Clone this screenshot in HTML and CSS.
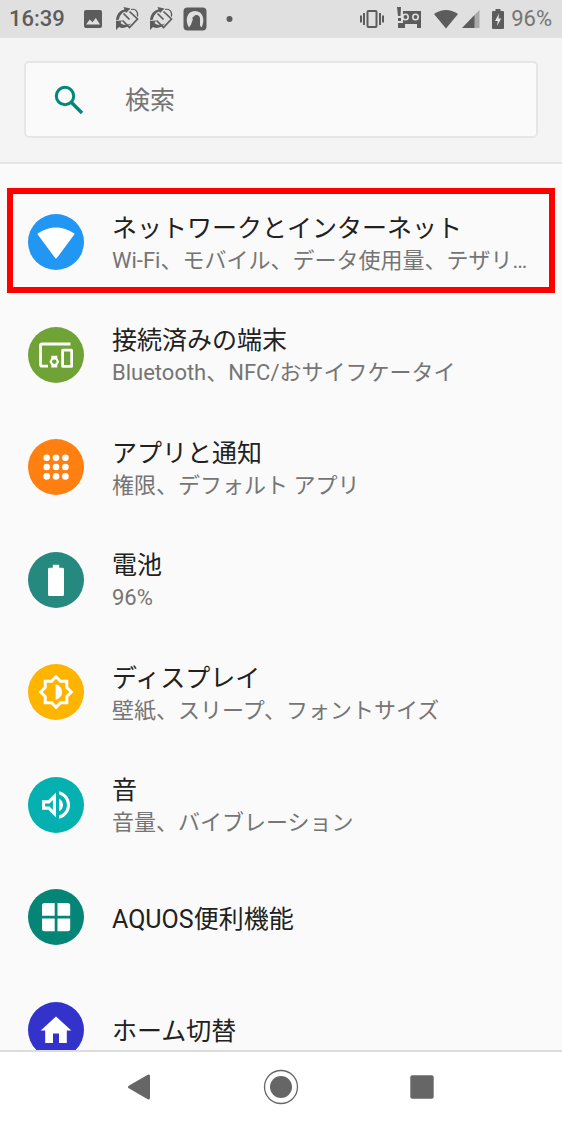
FILE: index.html
```html
<!DOCTYPE html>
<html lang="ja">
<head>
<meta charset="utf-8">
<meta name="viewport" content="width=device-width, initial-scale=1">
<title>設定</title>
<link rel="stylesheet" href="styles.css">
</head>
<body>
<svg class="defs" aria-hidden="true">
  <symbol id="rotate" viewBox="0 0 24 24">
    <path d="M8.500 6.500L14.500 12.500M14.500 4.500L22.500 12L14.500 20.500L7.500 13.500" fill="none" stroke="currentColor" stroke-width="1.700"/>
    <path d="M1 13.500C1.500 7 4.500 3.500 9.500 2.500L8.500 0L15.500 1.500L11 6L10.300 4.500C7 5.500 4.500 8.500 4 12.500Z" fill="currentColor"/>
    <path d="M1 14L7 13.500L5.500 16C8 18.500 12 18.500 16 16.500C13 20.500 8 22 4 20L1 23Z" fill="currentColor"/>
    <path d="M16 2.500C20 1.500 23.500 4 22.500 9.500" fill="none" stroke="currentColor" stroke-width="1.200"/>
  </symbol>
</svg>
<div class="screen">
  <header class="status">
    <time class="clock">16:39</time>
    <div class="notices">
      <svg width="24" height="24" viewBox="0 0 24 24"><path fill="currentColor" fill-rule="evenodd" d="M5 3H19Q21 3 21 5V19Q21 21 19 21H5Q3 21 3 19V5Q3 3 5 3ZM5 17.500H19L14.800 11L11.500 15.200L8.800 12.500Z"/></svg>
      <svg width="24" height="24"><use href="#rotate"/></svg>
      <svg width="24" height="24"><use href="#rotate"/></svg>
      <svg width="24" height="24" viewBox="0 0 24 24"><rect x="0.500" y="0.500" width="23" height="23" rx="4" fill="currentColor"/><path d="M6 20.500C1.500 13 4 4 12 4S22.500 13 18.500 20.500L17 18.500V11.500C17 9 15 7.500 12.500 8L9 11L10 12L8 17.500Z" fill="#e0e0e0"/></svg>
      <svg width="24" height="24" viewBox="0 0 24 24"><circle cx="12.500" cy="12" r="3" fill="currentColor"/></svg>
    </div>
    <div class="signals">
      <svg width="26" height="24" viewBox="0 0 26 24"><g fill="none" stroke="currentColor" stroke-width="2"><rect x="8.500" y="4" width="9" height="16" rx="1"/><path d="M5 6V18M2 8.500V15.500M21 6V18M24 8.500V15.500"/></g></svg>
      <svg width="24" height="24" viewBox="0 0 24 24"><g fill="currentColor"><path d="M0 0H4L3.500 9H1ZM1 11H4V14H1ZM6 4H24V21H20V17H8V21H1V16H6Z"/></g><g fill="currentColor" stroke="#e0e0e0" stroke-width="1.600"><circle cx="8.500" cy="10" r="2.700"/><circle cx="18.500" cy="10" r="2.700"/></g></svg>
      <span class="radio">
        <svg width="26" height="24" viewBox="0 0 26 24"><path d="M1 7Q13-1 25 7L13 21.500Z" fill="currentColor"/></svg>
        <svg width="18" height="24" viewBox="0 0 18 24"><path d="M17.500 3V21H12V8.500Z" fill="#aaa"/><path d="M0 21L12.500 8V21Z" fill="currentColor"/></svg>
      </span>
      <span class="charge">
        <svg width="12" height="24" viewBox="0 0 12 24"><path d="M3.500 2H8.500V4H11Q12 4 12 5V21Q12 22 11 22H1Q0 22 0 21V5Q0 4 1 4H3.500Z" fill="currentColor"/><path d="M7 6.500L3 14H5.800L5 19L9.200 11.500H6.500Z" fill="#e8e8e8"/></svg>
        <span class="percent">96%</span>
      </span>
    </div>
  </header>

  <form class="search" role="search">
    <label class="search-box">
      <svg class="search-icon" width="30" height="30" viewBox="0 0 30 30" role="img" aria-label="検索"><circle cx="11" cy="11" r="8.700" fill="none" stroke="#00897b" stroke-width="3"/><path d="M17.500 17.500L28 28" stroke="#00897b" stroke-width="3.600"/></svg>
      <input class="search-input" type="search" placeholder="検索">
    </label>
  </form>

  <main class="content">
    <ul class="settings">
      <li class="row marked">
        <svg class="badge blue" viewBox="0 0 56 56"><path d="M10.500 20Q28 9 45.500 20L28 43.500Z" stroke="#fff" stroke-width="2" stroke-linejoin="round"/></svg>
        <a class="text" href="#network"><span class="name">ネットワークとインターネット</span><span class="note">Wi-Fi、モバイル、データ使用量、テザリ…</span></a>
      </li>
      <li class="row">
        <svg class="badge green" viewBox="0 0 56 56"><path d="M42.500 17H14Q12.500 17 12.500 18.500V37.500Q12.500 39.200 14 39.200H20" fill="none" stroke="#fff" stroke-width="2.800"/><path fill-rule="evenodd" d="M35 21.700H43.500Q45 21.700 45 23.200V39.300Q45 40.800 43.500 40.800H35Q33.200 40.800 33.200 39.300V23.200Q33.200 21.700 35 21.700ZM36 24.500V38H42.300V24.500ZM23.300 28.700H29.300V31.300L31.200 34.700L29.300 38V40.600H23.300V38L21.400 34.700L23.300 31.300ZM26.300 32.400A2.300 2.300 0 1 0 26.310 32.400Z"/></svg>
        <a class="text" href="#devices"><span class="name">接続済みの端末</span><span class="note">Bluetooth、NFC/おサイフケータイ</span></a>
      </li>
      <li class="row">
        <svg class="badge orange" viewBox="0 0 56 56"><circle cx="18.700" cy="18.700" r="3.300"/><circle cx="28" cy="18.700" r="3.300"/><circle cx="37.400" cy="18.700" r="3.300"/><circle cx="18.700" cy="28" r="3.300"/><circle cx="28" cy="28" r="3.300"/><circle cx="37.400" cy="28" r="3.300"/><circle cx="18.700" cy="37.400" r="3.300"/><circle cx="28" cy="37.400" r="3.300"/><circle cx="37.400" cy="37.400" r="3.300"/></svg>
        <a class="text" href="#apps"><span class="name">アプリと通知</span><span class="note">権限、デフォルト アプリ</span></a>
      </li>
      <li class="row">
        <svg class="badge teal" viewBox="0 0 56 56"><path d="M24.800 12.700H31.200V15.800H34.500Q36 15.800 36 17.300V42.500Q36 44 34.500 44H21.500Q20 44 20 42.500V17.300Q20 15.800 21.500 15.800H24.800Z"/></svg>
        <a class="text" href="#battery"><span class="name">電池</span><span class="note">96%</span></a>
      </li>
      <li class="row">
        <svg class="badge yellow" viewBox="0 0 56 56"><path d="M28 12.700L32.500 17.200H38.800V23.500L43.300 28L38.800 32.500V38.800H32.500L28 43.300L23.500 38.800H17.200V32.500L12.700 28L17.200 23.500V17.200H23.500Z" fill="none" stroke="#fff" stroke-width="3"/><path d="M27.600 20.300A7.800 7.800 0 0 1 27.600 35.700Z"/></svg>
        <a class="text" href="#display"><span class="name">ディスプレイ</span><span class="note">壁紙、スリープ、フォントサイズ</span></a>
      </li>
      <li class="row">
        <svg class="badge cyan" viewBox="0 0 56 56"><path transform="translate(9.300 9.300) scale(1.560)" d="M3 9v6h4l5 5V4L7 9H3zm7-.17v6.340L7.830 13H5v-2h2.830L10 8.830zM16.500 12c0-1.770-1.020-3.290-2.500-4.030v8.050c1.480-.73 2.500-2.250 2.500-4.020zM14 3.230v2.060c2.890.86 5 3.540 5 6.710s-2.110 5.850-5 6.710v2.060c4.010-.91 7-4.490 7-8.770s-2.990-7.860-7-8.770z"/></svg>
        <a class="text" href="#sound"><span class="name">音</span><span class="note">音量、バイブレーション</span></a>
      </li>
      <li class="row">
        <svg class="badge pine" viewBox="0 0 56 56"><path d="M16.500 14H26.700V26.700H14V16.500Q14 14 16.500 14ZM29.500 14H39.700Q42.200 14 42.200 16.500V26.700H29.500ZM14 29.500H26.700V42.200H16.500Q14 42.200 14 39.700ZM29.500 29.500H42.200V39.700Q42.200 42.200 39.700 42.200H29.500Z"/></svg>
        <a class="text" href="#aquos"><span class="name">AQUOS便利機能</span></a>
      </li>
      <li class="row">
        <svg class="badge indigo" viewBox="0 0 56 56"><path d="M25 41V31.500H31V41H38.800V28.500H43.300L28 14.500L12.700 28.500H17.200V41Z"/></svg>
        <a class="text" href="#home"><span class="name">ホーム切替</span></a>
      </li>
    </ul>
  </main>

  <nav class="keys">
    <button class="key" type="button" aria-label="戻る"><svg width="26" height="36" viewBox="0 0 26 36"><path d="M2.500 18L21.500 7V29Z" fill="currentColor" stroke="currentColor" stroke-width="3" stroke-linejoin="round"/></svg></button>
    <button class="key" type="button" aria-label="ホーム"><svg width="36" height="36" viewBox="0 0 36 36"><circle cx="18" cy="18" r="16.500" fill="none" stroke="currentColor" stroke-width="1.300"/><circle cx="18" cy="18" r="11" fill="currentColor"/></svg></button>
    <button class="key" type="button" aria-label="履歴"><svg width="24" height="36" viewBox="0 0 24 36"><rect x=".3" y="6.300" width="23.400" height="23.400" rx="2" fill="currentColor"/></svg></button>
  </nav>
</div>
</body>
</html>
```
FILE: styles.css
```css
* {
  box-sizing: border-box;
}

body {
  margin: 0;
  background: #fafafa;
  color: #212121;
  font-family: Roboto, "Noto Sans CJK JP", sans-serif;
}

svg {
  display: block;
  flex: none;
}

.defs {
  display: none;
}

.screen {
  display: flex;
  flex-direction: column;
  height: 100vh;
}

.status {
  display: flex;
  flex: none;
  align-items: center;
  gap: 16px;
  height: 38px;
  padding: 0 10px 0 9px;
  background: #e0e0e0;
  color: #5c5c5c;
  font-size: 22px;
  line-height: 38px;
}

.clock {
  font-weight: 500;
}

.percent {
  color: #757575;
}

.notices {
  display: flex;
  gap: 10px;
}

.signals {
  display: flex;
  align-items: center;
  gap: 12px;
  margin-left: auto;
}

.radio {
  display: flex;
  gap: 3px;
}

.charge {
  display: flex;
  align-items: center;
  gap: 7px;
}

.search {
  flex: none;
  padding: 23px 24px 24px;
  background: #f4f4f4;
  border-bottom: 2px solid #e6e6e6;
}

.search-box {
  display: flex;
  align-items: center;
  gap: 41px;
  height: 77px;
  padding: 0 28px;
  background: #fafafa;
  border: 2px solid #e6e6e6;
  border-radius: 5px;
}

.search-input {
  flex: 1;
  min-width: 0;
  padding: 2px 0 0;
  border: 0;
  outline: 0;
  background: none;
  color: #212121;
  font: inherit;
  font-size: 25px;
  line-height: 36px;
}

.search-input::placeholder {
  color: #757575;
}

.content {
  flex: 1;
  min-height: 0;
  overflow: hidden;
  padding-top: 22px;
}

.settings {
  display: grid;
  grid-template-rows: repeat(8, 1fr);
  height: 900px;
  margin: 0;
  padding: 0;
  list-style: none;
}

.row {
  position: relative;
  display: flex;
  align-items: center;
  gap: 28px;
  min-width: 0;
  padding: 0 28px;
}

.marked::after {
  content: "";
  position: absolute;
  inset: 2px 7px 6px;
  border: 6px solid #f00;
  pointer-events: none;
}

.badge {
  width: 56px;
  height: 56px;
  border-radius: 50%;
  fill: #fff;
}

.blue { background: #2196f3; }
.green { background: #70a335; }
.orange { background: #ff7f11; }
.teal { background: #26897f; }
.yellow { background: #ffb400; }
.cyan { background: #04b0b0; }
.pine { background: #048575; }
.indigo { background: #3333cc; }

.text {
  display: flex;
  flex: 1;
  flex-direction: column;
  min-width: 0;
  padding-top: 5px;
  color: inherit;
  text-decoration: none;
}

.name,
.note {
  overflow: hidden;
  line-height: 32px;
  text-overflow: ellipsis;
  white-space: nowrap;
}

.name {
  font-size: 25px;
}

.note {
  color: #757575;
  font-size: 22px;
}

.keys {
  display: grid;
  flex: none;
  grid-template-columns: repeat(3, 1fr);
  height: 75px;
  padding: 0 70px 3px;
  background: #fff;
  border-top: 2px solid #dcdcdc;
}

.key {
  display: flex;
  align-items: center;
  justify-content: center;
  padding: 0;
  border: 0;
  background: none;
  color: #666;
}
```
